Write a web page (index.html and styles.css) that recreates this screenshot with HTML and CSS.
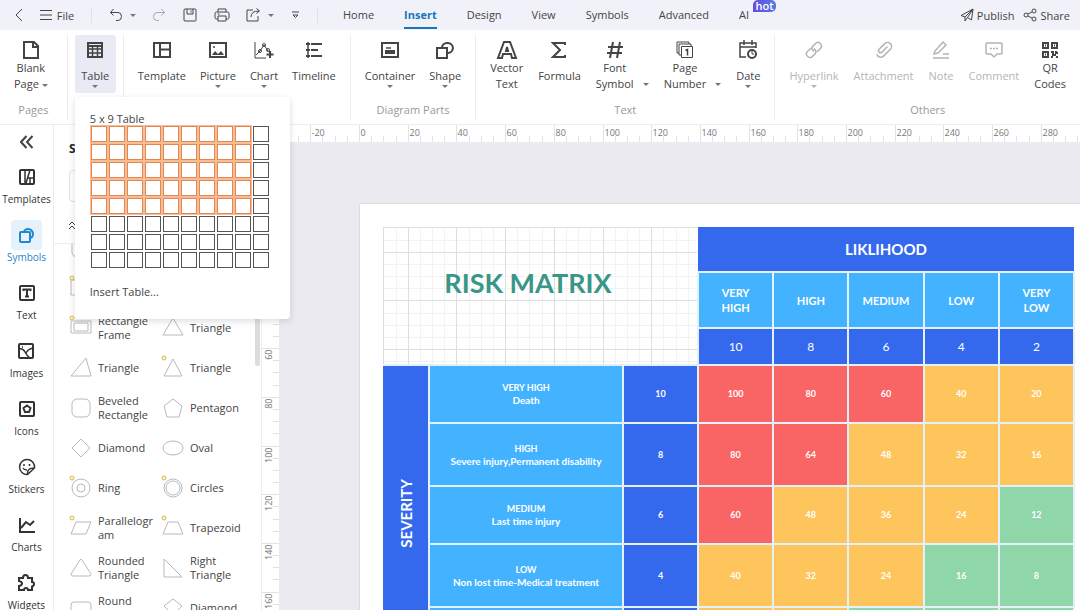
FILE: index.html
```html
<!DOCTYPE html>
<html lang="en">
<head>
  <meta charset="UTF-8">
  <meta name="viewport" content="width=device-width, initial-scale=1.0">
  <title>Risk Matrix</title>
  <link rel="stylesheet" href="styles.css">
</head>
<body>

<header class="topbar">
  <div class="quick">
    <button class="q-btn back" aria-label="Back"><svg width="8" height="14" viewBox="0 0 8 14"><path d="M7 1L1 7l6 6"/></svg></button>
    <button class="q-btn file"><svg width="12" height="12" viewBox="0 0 12 12"><path d="M0 1.5h12M0 6h12M0 10.5h12"/></svg>File</button>
    <span class="divider"></span>
    <button class="q-btn undo" aria-label="Undo"><svg width="14" height="14" viewBox="0 0 14 14"><path d="M4.500 1L1.500 4.500l3 3M1.500 4.500H9a3.500 4 0 0 1 0 8H7"/></svg><i class="caret"></i></button>
    <button class="q-btn redo" aria-label="Redo"><svg width="14" height="14" viewBox="0 0 14 14"><path d="M9.500 1l3 3.500-3 3M12.500 4.500H5a3.500 4 0 0 0 0 8h2"/></svg></button>
    <button class="q-btn save" aria-label="Save"><svg width="14" height="14" viewBox="0 0 14 14"><rect x="1" y="1" width="12" height="12" rx="1"/><path d="M4 1v5h6V1M8 2.500v2"/></svg></button>
    <button class="q-btn print" aria-label="Print"><svg width="16" height="14" viewBox="0 0 16 14"><path d="M4 4V1h8v3M4 11H2.500Q1 11 1 9.500V5.500Q1 4 2.500 4h11Q15 4 15 5.500v4Q15 11 13.500 11H12"/><path d="M4 8h8v5H4zM3.500 6h2"/></svg></button>
    <button class="q-btn export" aria-label="Export"><svg width="15" height="14" viewBox="0 0 15 14"><path d="M7 2H1v11h11V8M5 9q0-6 8-6M10.500 0.500L13.500 3l-3 2.500"/></svg><i class="caret"></i></button>
    <button class="q-btn" aria-label="More"><svg width="9" height="8" viewBox="0 0 9 8"><path d="M1 1h7M2 4l2.500 2.500L7 4z"/></svg></button>
    <span class="divider"></span>
  </div>
  <nav class="tabs">
    <a href="#">Home</a>
    <a href="#" class="active">Insert</a>
    <a href="#">Design</a>
    <a href="#">View</a>
    <a href="#">Symbols</a>
    <a href="#">Advanced</a>
    <a href="#" class="ai">AI<span class="hot">hot</span></a>
  </nav>
  <div class="share">
    <button class="q-btn"><svg width="14" height="14" viewBox="0 0 14 14"><path d="M1 7.500L13 1l-1.500 11-4-2.500L5 13V9zM5 9l8-8-5.500 8.500"/></svg>Publish</button>
    <button class="q-btn"><svg width="14" height="14" viewBox="0 0 14 14"><circle cx="3" cy="7" r="2"/><circle cx="11" cy="3" r="2"/><circle cx="11" cy="11" r="2"/><path d="M5 6l4-2M5 8l4 2"/></svg>Share</button>
  </div>
</header>

<section class="ribbon">
  <div class="group pages">
    <div class="tools">
      <button class="tool two"><svg width="18" height="20" viewBox="0 0 18 20"><path d="M2 2h10l4 4v12H2zM11 2v5h5"/></svg><span>Blank</span><span>Page <i class="caret"></i></span></button>
    </div>
    <div class="group-name">Pages</div>
  </div>
  <div class="group table-group">
    <div class="tools">
      <button class="tool active"><svg width="18" height="18" viewBox="0 0 18 18"><path d="M2 2h14v14H2zM2 5h14"/><path class="mid" d="M2 8h14M2 12h14M6.500 6v10M11.500 6v10"/></svg><span>Table</span><i class="caret"></i></button>
    </div>
    <div class="table-menu">
      <div class="menu-title">5 x 9 Table</div>
      <div class="size-grid" id="sizeGrid"></div>
      <button class="insert-table">Insert Table...</button>
    </div>
  </div>
  <div class="group">
    <div class="tools">
      <button class="tool"><svg width="18" height="18" viewBox="0 0 18 18"><path d="M1 2h16v14H1zM7 2v14M7 8.500h10"/></svg><span>Template</span></button>
      <button class="tool"><svg width="18" height="18" viewBox="0 0 18 18"><path d="M1 2h16v14H1z"/><path class="fill" d="M3 14l3-4 3 3 3-3 3 4z"/><circle class="fill" cx="5" cy="6" r="1"/></svg><span>Picture</span><i class="caret"></i></button>
      <button class="tool"><svg width="20" height="18" viewBox="0 0 20 18"><path class="thin" d="M1 1v16h11M2 14l4-4 4-6 4 6"/><circle class="thin" cx="6" cy="10" r="1.500"/><circle class="thin" cx="10" cy="4" r="1.500"/><circle class="thin" cx="14" cy="9" r="1.500"/><path d="M16 10v7M12.500 13.500h7"/></svg><span>Chart</span><i class="caret"></i></button>
      <button class="tool"><svg width="18" height="18" viewBox="0 0 18 18"><path class="mid" d="M3 1v16"/><path d="M6 3h11M6 9h7M6 15h11M1 3h4M1 9h4M1 15h4"/></svg><span>Timeline</span></button>
    </div>
  </div>
  <div class="group">
    <div class="tools">
      <button class="tool"><svg width="18" height="18" viewBox="0 0 18 18"><path d="M1 2h16v14H1z"/><path class="mid" d="M5 7h5"/><path class="fill" d="M4 9h10v4H4z"/></svg><span>Container</span><i class="caret"></i></button>
      <button class="tool"><svg width="18" height="18" viewBox="0 0 18 18"><path d="M1 7h10v10H1zM6 6a5.500 5 0 1 1 5 6"/></svg><span>Shape</span><i class="caret"></i></button>
    </div>
    <div class="group-name">Diagram Parts</div>
  </div>
  <div class="group wide">
    <div class="tools">
      <button class="tool two"><svg width="22" height="20" viewBox="0 0 22 20"><path d="M8 2h6l6 16h-4l-1-4H7l-1 4H2zM11 7l-1 4h2z"/></svg><span>Vector</span><span>Text</span></button>
      <button class="tool"><svg width="16" height="18" viewBox="0 0 16 18"><path d="M14 4V2H2l7 7-7 7h12v-2"/></svg><span>Formula</span></button>
      <div class="with-caret"><button class="tool two"><svg width="18" height="18" viewBox="0 0 18 18"><path d="M7 1L4 17M14 1l-3 16M2 6h15M1 12h15"/></svg><span>Font</span><span>Symbol</span></button><i class="caret"></i></div>
      <div class="with-caret"><button class="tool two"><svg width="18" height="18" viewBox="0 0 18 18"><path class="thin" d="M3 12H1V1h12v2M5 14H3V3h12v2"/><path class="thin" d="M5.500 5.500h11v11h-11z"/><path class="mid" d="M9.500 9.500l2-1v6"/></svg><span>Page</span><span>Number</span></button><i class="caret"></i></div>
      <button class="tool"><svg width="18" height="20" viewBox="0 0 18 20"><path class="mid" d="M7 17H1V3h16v5M1 7h16M5 0v5M13 0v5"/><circle cx="13" cy="14" r="4"/><path class="thin" d="M13 11v3h2"/></svg><span>Date</span><i class="caret"></i></button>
    </div>
    <div class="group-name">Text</div>
  </div>
  <div class="group wide">
    <div class="tools">
      <button class="tool" disabled><svg width="18" height="18" viewBox="0 0 18 18"><g transform="rotate(-45 9 9)"><path d="M8 5.500H3a3 3 0 0 0-3 3v1a3 3 0 0 0 3 3h4a3 3 0 0 0 3-3V8M10 12.500h5a3 3 0 0 0 3-3v-1a3 3 0 0 0-3-3h-4a3 3 0 0 0-3 3V10"/></g></svg><span>Hyperlink</span><i class="caret"></i></button>
      <button class="tool" disabled><svg width="18" height="18" viewBox="0 0 18 18"><g transform="rotate(-45 9 9)"><path d="M14 9H6a1.500 1.500 0 0 1 0-4h8a4 4 0 0 1 0 8H4a4 4 0 0 1-3-6"/></g></svg><span>Attachment</span></button>
      <button class="tool" disabled><svg width="18" height="18" viewBox="0 0 18 18"><path d="M3 10l8-9 3 3-8 8-4 1zM1 17h16M11 13h6"/></svg><span>Note</span></button>
      <button class="tool" disabled><svg width="18" height="18" viewBox="0 0 18 18"><path d="M2 2h14q1 0 1 1v9q0 1-1 1h-4l-3 3-3-3H2q-1 0-1-1V3q0-1 1-1zM5 7.500h2M8 7.500h2M11 7.500h2"/></svg><span>Comment</span></button>
      <button class="tool two"><svg width="18" height="18" viewBox="0 0 18 18"><path d="M2 2h5v5H2zM11 2h5v5h-5zM2 11h5v5H2z"/><path d="M4 4.500h1M13 4.500h1M4 13.500h1M10 11h2v3h3M15 10v2h2M11 17v-2M16 17v-2"/></svg><span>QR</span><span>Codes</span></button>
    </div>
    <div class="group-name">Others</div>
  </div>
</section>

<main class="workspace">
  <aside class="rail">
    <button class="collapse" aria-label="Collapse"><svg width="14" height="14" viewBox="0 0 14 14"><path d="M6.500 1L1 7l5.500 6M12.500 1L7 7l5.500 6"/></svg></button>
    <button class="rail-item"><span class="rail-icon"><svg width="18" height="18" viewBox="0 0 18 18"><rect x="2" y="2" width="14" height="14" rx="1"/><path class="mid" d="M7 2v14M8 15l4-13M10 10h6M12 10v6"/></svg></span>Templates</button>
    <button class="rail-item active"><span class="rail-icon"><svg width="18" height="18" viewBox="0 0 18 18"><rect x="2" y="6" width="10" height="10" rx="1"/><path d="M6 5a5 5 0 1 1 7 7"/></svg></span>Symbols</button>
    <button class="rail-item"><span class="rail-icon"><svg width="18" height="18" viewBox="0 0 18 18"><rect x="2" y="2" width="14" height="14" rx="1"/><path d="M5.500 7V5.500h7V7M9 6v7M7 12.500h4"/></svg></span>Text</button>
    <button class="rail-item"><span class="rail-icon"><svg width="18" height="18" viewBox="0 0 18 18"><rect x="2" y="2" width="14" height="14" rx="1"/><path class="mid" d="M2 7q4-1 6 3t5 6M9 11q2-4 7-5M5 5h1"/></svg></span>Images</button>
    <button class="rail-item"><span class="rail-icon"><svg width="18" height="18" viewBox="0 0 18 18"><rect x="2" y="2" width="14" height="14" rx="1"/><path d="M9 5.500L12.500 8 11 12H7L5.500 8z"/></svg></span>Icons</button>
    <button class="rail-item"><span class="rail-icon"><svg width="18" height="18" viewBox="0 0 18 18"><path class="mid" d="M16.500 10a7.500 7.500 0 1 0-7 6.500zM9.500 16Q9 10 16 10M6 6v2M11.500 6v2M5 10q1 2 4 2"/></svg></span>Stickers</button>
    <button class="rail-item"><span class="rail-icon"><svg width="18" height="18" viewBox="0 0 18 18"><path d="M2 2v14h15M3 12l5-6 4 3 4-4"/></svg></span>Charts</button>
    <button class="rail-item"><span class="rail-icon"><svg width="18" height="18" viewBox="0 0 18 18"><path d="M2 4h4q0-3 2.500-3T11 4h4v4q2 0 2 2t-2 2.500V16h-4q0-2-2-2t-2 2H2v-4q3-.5 3-2.500T2 7z"/></svg></span>Widgets</button>
  </aside>

  <aside class="panel">
    <h2>Symbols</h2>
    <input class="search" type="search" aria-label="Search symbols">
    <div class="panel-bar"><svg width="8" height="9" viewBox="0 0 8 9"><path d="M1 4l3-3 3 3M1 8l3-3 3 3"/></svg></div>
    <div class="shapes" id="shapes"></div>
    <span class="thumb"></span>
  </aside>

  <section class="canvas">
    <svg class="ruler-top" id="rulerTop"></svg>
    <svg class="ruler-left" id="rulerLeft"></svg>
    <div class="board">
      <div class="page">
        <table class="matrix">
          <colgroup>
            <col class="c-side"><col class="c-name"><col class="c-score"><col><col><col><col><col>
          </colgroup>
          <tr class="r-top">
            <td class="title" colspan="3" rowspan="3"><svg class="grid" id="grid"></svg><h1>RISK MATRIX</h1></td>
            <th class="blue likelihood" colspan="5">LIKLIHOOD</th>
          </tr>
          <tr class="r-level">
            <th>VERY<br>HIGH</th><th>HIGH</th><th>MEDIUM</th><th>LOW</th><th>VERY<br>LOW</th>
          </tr>
          <tr class="r-number">
            <td>10</td><td>8</td><td>6</td><td>4</td><td>2</td>
          </tr>
          <tr>
            <th class="blue severity" rowspan="5"><span>SEVERITY</span></th>
            <th class="sky">VERY HIGH<p>Death</p></th><td class="blue">10</td>
            <td class="red">100</td><td class="red">80</td><td class="red">60</td><td class="amber">40</td><td class="amber">20</td>
          </tr>
          <tr class="tall">
            <th class="sky">HIGH<p>Severe injury,Permanent disability</p></th><td class="blue">8</td>
            <td class="red">80</td><td class="red">64</td><td class="amber">48</td><td class="amber">32</td><td class="amber">16</td>
          </tr>
          <tr>
            <th class="sky">MEDIUM<p>Last time injury</p></th><td class="blue">6</td>
            <td class="red">60</td><td class="amber">48</td><td class="amber">36</td><td class="amber">24</td><td class="green">12</td>
          </tr>
          <tr class="tall">
            <th class="sky">LOW<p>Non lost time-Medical treatment</p></th><td class="blue">4</td>
            <td class="amber">40</td><td class="amber">32</td><td class="amber">24</td><td class="green">16</td><td class="green">8</td>
          </tr>
          <tr>
            <th class="sky"></th><td class="blue"></td>
            <td class="amber"></td><td class="amber"></td><td class="green"></td><td class="green"></td><td class="green"></td>
          </tr>
        </table>
      </div>
    </div>
  </section>
</main>

<script>
  // Table size picker, 8 rows of 10
  const sizeGrid = document.getElementById('sizeGrid');
  for (let r = 1; r <= 8; r++) {
    for (let c = 1; c <= 10; c++) {
      const cell = document.createElement('button');
      cell.className = r <= 5 && c <= 9 ? 'cell on' : 'cell';
      cell.setAttribute('aria-label', r + ' x ' + c);
      sizeGrid.appendChild(cell);
    }
  }

  // Symbol library, two per row. dot = has an adjust handle
  const shapes = [
    { name: '', round: true },
    { name: '', d: 'M2 2h17v17H2z' },
    { name: '', d: 'M1 3h19v15H1z', dot: true },
    { name: '', d: 'M2 2h17v17H2z', dot: true },
    { name: 'Rectangle Frame', d: 'M1 4h20v12H1zM4 6h14v8H4z', dot: true },
    { name: 'Triangle', d: 'M11 1l10 17H1z' },
    { name: 'Triangle', d: 'M16 1l5 18H1z' },
    { name: 'Triangle', d: 'M11 2l9 17H2z', dot: true },
    { name: 'Beveled Rectangle', round: true },
    { name: 'Pentagon', d: 'M11 2l9 7-3 11H5L2 9z' },
    { name: 'Diamond', d: 'M11 2l9 9-9 9-9-9z' },
    { name: 'Oval', d: 'M1 11a10 7 0 0 1 20 0a10 7 0 0 1-20 0' },
    { name: 'Ring', d: 'M2 11a9 9 0 0 1 18 0a9 9 0 0 1-18 0M7 11a4 4 0 0 1 8 0a4 4 0 0 1-8 0', dot: true },
    { name: 'Circles', d: 'M2 11a9 9 0 0 1 18 0a9 9 0 0 1-18 0M4 11a7 7 0 0 1 14 0a7 7 0 0 1-14 0', dot: true },
    { name: 'Parallelogram', d: 'M6 5h15l-5 12H1z', dot: true },
    { name: 'Trapezoid', d: 'M6 5h10l5 12H1z', dot: true },
    { name: 'Rounded Triangle', d: 'M10 3q1-2 2 0l9 14q0 2-2 2H3q-2 0-2-2z' },
    { name: 'Right Triangle', d: 'M2 2l18 18H2z' },
    { name: 'Round Rectangle', d: 'M4 5h14q3 0 3 3v6q0 3-3 3H4q-3 0-3-3V8q0-3 3-3z' },
    { name: 'Diamond', d: 'M11 2l9 7-9 9-9-9z' },
  ];
  const list = document.getElementById('shapes');
  shapes.forEach(({ name, d, dot, round }) => {
    const shape = round
      ? '<rect x="2" y="2" width="18" height="18" rx="5"/>'
      : `<path d="${d}"/>`;
    list.innerHTML += `
      <button class="shape">
        <svg width="22" height="22" viewBox="0 0 22 22">${shape}${dot ? '<circle class="dot" cx="2" cy="1" r="2"/>' : ''}</svg>
        <span>${name}</span>
      </button>
    `;
  });
  list.scrollTop = 16;

  // Rulers and grid share one scale: 20 units take about 48.7px
  const unit = 2.435;
  const line = (x1, y1, x2, y2, cls) =>
    `<line class="${cls}" x1="${x1}" y1="${y1}" x2="${x2}" y2="${y2}"/>`;
  const at = (origin, v) => Math.round(origin + v * unit) + 0.5;

  // The sheet is 297 units wide and 210 high
  let across = '';
  for (let v = -35; v <= 295; v += 5) {
    const x = at(98, v);
    across += line(x, v % 20 ? 11 : 0, x, 18, 'tick');
    if (v % 20 === 0) across += `<text x="${x + 1}" y="11">${v}</text>`;
  }
  document.getElementById('rulerTop').innerHTML = across;

  let down = '';
  for (let v = -20; v <= 210; v += 5) {
    const y = at(60, v);
    down += line(v % 20 ? 11 : 0, y, 18, y, 'tick');
    if (v % 20 === 0) down += `<text text-anchor="end" transform="translate(10 ${y + 1}) rotate(-90)">${v}</text>`;
  }
  document.getElementById('rulerLeft').innerHTML = down;

  let grid = '';
  ['minor', 'major'].forEach((cls) => {
    for (let v = 0; v <= 160; v += 5) {
      if ((v % 20 === 0) !== (cls === 'major')) continue;
      const p = at(-25, v);
      grid += line(p, 0, p, 400, cls) + line(0, p, 400, p, cls);
    }
  });
  document.getElementById('grid').innerHTML = grid;
</script>

</body>
</html>
```
FILE: styles.css
```css
* {
  box-sizing: border-box;
}

body {
  margin: 0;
  height: 100vh;
  overflow: hidden;
  display: flex;
  flex-direction: column;
  font-family: "Open Sans", "Noto Sans", sans-serif;
  font-size: 11px;
  color: #444;
  background: #fff;
}

button {
  font: inherit;
  color: inherit;
  background: none;
  border: 0;
  padding: 0;
}

svg {
  fill: none;
  stroke: currentColor;
  flex: none;
}

.caret {
  border: 3px solid transparent;
  border-top-color: #777;
  border-bottom: 0;
}

/* Top bar */
.topbar {
  flex: none;
  height: 30px;
  display: flex;
  align-items: center;
  background: #f1f2f9;
}

.quick {
  width: 318px;
  display: flex;
  align-items: center;
  justify-content: space-between;
  padding-left: 15px;
}

.q-btn {
  display: flex;
  align-items: center;
  gap: 5px;
}

.undo, .export {
  gap: 7px;
}

.redo {
  color: #aaa;
}

.divider {
  width: 1px;
  height: 16px;
  background: #e0e2ea;
}

.tabs {
  flex: 1;
  height: 30px;
  display: flex;
  gap: 30px;
  padding-left: 25px;
}

.tabs a {
  color: #444;
  text-decoration: none;
  line-height: 30px;
  height: 29px;
}

.tabs .active {
  color: #1677c0;
  font-weight: bold;
  border-bottom: 2px solid #1677c0;
}

.ai {
  position: relative;
}

.hot {
  position: absolute;
  left: 14px;
  top: 0;
  width: 23px;
  height: 12px;
  line-height: 11px;
  text-align: center;
  color: #fff;
  font-weight: 600;
  border-radius: 5px 5px 5px 0;
  background: linear-gradient(90deg, #6a48dc, #4f7ce0);
}

.share {
  display: flex;
  gap: 9px;
  padding-right: 10px;
}

.share .q-btn {
  gap: 3px;
}

/* Ribbon */
.ribbon {
  flex: none;
  height: 95px;
  display: flex;
  padding: 5px 0;
  border-bottom: 1px solid #ececf0;
}

.group {
  position: relative;
  display: flex;
  flex-direction: column;
  justify-content: space-between;
  padding: 0 14px;
  border-right: 1px solid #ececf0;
}

.group:last-child {
  border-right: 0;
}

.pages {
  width: 68px;
}

.pages .tools {
  justify-content: flex-start;
}

.table-group {
  padding: 0 7px;
}

.tools {
  display: flex;
  justify-content: center;
  gap: 14px;
}

.wide .tools {
  gap: 15px;
}

.tool {
  height: 58px;
  display: flex;
  flex-direction: column;
  align-items: center;
  line-height: 16px;
  padding-top: 5px;
  white-space: nowrap;
}

.tool svg {
  height: 20px;
  stroke-width: 2;
}

.tool span {
  margin-top: 8px;
}

.tool > .caret {
  margin-top: 1px;
}

.tool.two span {
  margin-top: 0;
}

.tool.two .caret {
  display: inline-block;
  vertical-align: middle;
}

.tool .thin {
  stroke-width: 1;
}

.tool .mid, .rail .mid {
  stroke-width: 1.5;
}

.tool .fill {
  fill: currentColor;
  stroke: none;
}

.tool.active {
  width: 41px;
  background: #e9ebf4;
  border-radius: 3px;
}

.tool:disabled {
  color: #b4b4b8;
}

.tool:disabled .caret {
  border-top-color: #b4b4b8;
}

.tool:disabled svg {
  stroke-width: 1.5;
}

.with-caret {
  display: flex;
  align-items: flex-end;
  gap: 9px;
}

.with-caret .caret {
  margin-bottom: 7px;
}

.group-name {
  text-align: center;
  line-height: 18px;
  color: #999;
}

/* Table size menu */
.table-menu {
  position: absolute;
  z-index: 5;
  left: 7px;
  top: 62px;
  width: 215px;
  height: 222px;
  padding: 15px;
  background: #fff;
  border-radius: 4px;
  box-shadow: 0 2px 6px rgba(60, 60, 80, 0.18);
}

.menu-title {
  line-height: 14px;
}

.size-grid {
  display: grid;
  grid-template-columns: repeat(10, 16px);
  grid-auto-rows: 16px;
  gap: 2px;
  margin-left: 1px;
}

.cell {
  border: 1px solid #555;
}

.cell.on {
  border-color: #e5884f;
  box-shadow: 0 0 0 1px #f6bd97;
}

.insert-table {
  display: block;
  margin-top: 15px;
  line-height: 18px;
}

/* Left rail */
.workspace {
  flex: 1;
  min-height: 0;
  display: flex;
}

.rail {
  flex: none;
  width: 54px;
  display: flex;
  flex-direction: column;
  align-items: center;
  border-right: 1px solid #ececf0;
  overflow: hidden;
  stroke-width: 2;
}

.collapse {
  flex: none;
  height: 37px;
}

.rail-item {
  flex: none;
  height: 58px;
  display: flex;
  flex-direction: column;
  align-items: center;
  font-size: 10px;
  line-height: 14px;
  color: #333;
}

.rail-icon {
  width: 31px;
  height: 30px;
  display: grid;
  place-items: center;
  border-radius: 4px;
}

.rail-item.active {
  color: #1f86d0;
}

.rail-item.active .rail-icon {
  background: #e5f2fc;
}

/* Symbols panel */
.panel {
  position: relative;
  flex: none;
  width: 207px;
  display: flex;
  flex-direction: column;
}

.panel h2 {
  margin: 16px 15px 0;
  font-size: 12px;
  line-height: 16px;
  color: #222;
}

.search {
  height: 32px;
  margin: 13px 15px 0;
  border: 1px solid #e2e2e6;
  border-radius: 4px;
  background: #fff;
}

.panel-bar {
  flex: none;
  height: 42px;
  padding: 16px 14px 0;
  border-bottom: 1px solid #ececf0;
}

.shapes {
  flex: 1;
  min-height: 0;
  overflow: hidden;
  display: grid;
  grid-template-columns: 92px 92px;
  grid-auto-rows: 40px;
  padding-left: 16px;
}

.shape {
  display: flex;
  align-items: center;
  gap: 6px;
  text-align: left;
  line-height: 14px;
}

.shape svg {
  overflow: visible;
  stroke: #b9b9bd;
}

.shape .dot {
  stroke: #d2bd5a;
  fill: #fbf3c4;
}

.shape span {
  width: 60px;
  overflow-wrap: anywhere;
}

.thumb {
  position: absolute;
  right: 1px;
  top: 120px;
  width: 5px;
  height: 121px;
  border-radius: 3px;
  background: #dcdce0;
}

/* Canvas */
.canvas {
  flex: 1;
  min-width: 0;
  display: grid;
  grid-template-columns: 18px 1fr;
  grid-template-rows: 17px 1fr;
  background: #eaeaf0;
}

.ruler-top {
  grid-column: 1 / 3;
  width: 100%;
  height: 17px;
  background: #fff;
}

.ruler-left {
  width: 18px;
  height: 100%;
  background: #fff;
  border-left: 1px solid #ececf0;
}

.tick {
  stroke: #e2e2e6;
}

.canvas text {
  font-size: 9px;
  fill: #777;
  stroke: none;
}

.board {
  overflow: hidden;
  padding: 62px 0 0 81px;
}

.page {
  height: 700px;
  padding: 23px 5px 0 23px;
  background: #fff;
  box-shadow: 0 0 1px #999;
}

.matrix {
  width: 100%;
  table-layout: fixed;
  border-collapse: collapse;
  font-family: Lato, "Open Sans", sans-serif;
  font-size: 9px;
  font-weight: bold;
  line-height: 12px;
  color: #fff;
}

.c-side {
  width: 46px;
}

.c-name {
  width: 194px;
}

.c-score {
  width: 75px;
}

.matrix tr {
  height: 58px;
}

.matrix .tall {
  height: 63px;
}

.matrix .r-top {
  height: 45px;
}

.matrix .r-level {
  height: 56px;
}

.matrix .r-number {
  height: 37px;
}

.matrix td,
.matrix th {
  padding: 0;
  text-align: center;
  border: 2px solid #e4f1fb;
}

.matrix p {
  margin: 0;
  font-size: 10px;
}

.matrix .title {
  position: relative;
  border: 0;
  color: #3a9686;
}

.title h1 {
  position: relative;
  margin: 0 0 26px;
  padding-right: 24px;
  font-size: 27px;
  line-height: 34px;
}

.grid {
  position: absolute;
  left: 0;
  top: 0;
  width: 100%;
  height: 100%;
  border: 1px solid #dcdfe2;
  border-width: 1px 0 0 1px;
}

.minor {
  stroke: #f0f2f4;
}

.major {
  stroke: #dcdfe2;
}

.matrix .likelihood {
  font-size: 15px;
  border: 0;
}

.r-level th {
  font-size: 11px;
  line-height: 15px;
  background: #43b2ff;
}

.r-number td {
  font-size: 12px;
  font-weight: normal;
  background: #3469ee;
}

.blue {
  background: #3469ee;
}

.sky {
  background: #43b2ff;
}

.red {
  background: #f96464;
}

.amber {
  background: #fdc55c;
}

.green {
  background: #8fd6a9;
}

.matrix .severity {
  border-left: 0;
}

.severity span {
  display: inline-block;
  writing-mode: vertical-rl;
  transform: rotate(180deg);
  font-size: 15px;
  line-height: 20px;
}
```
